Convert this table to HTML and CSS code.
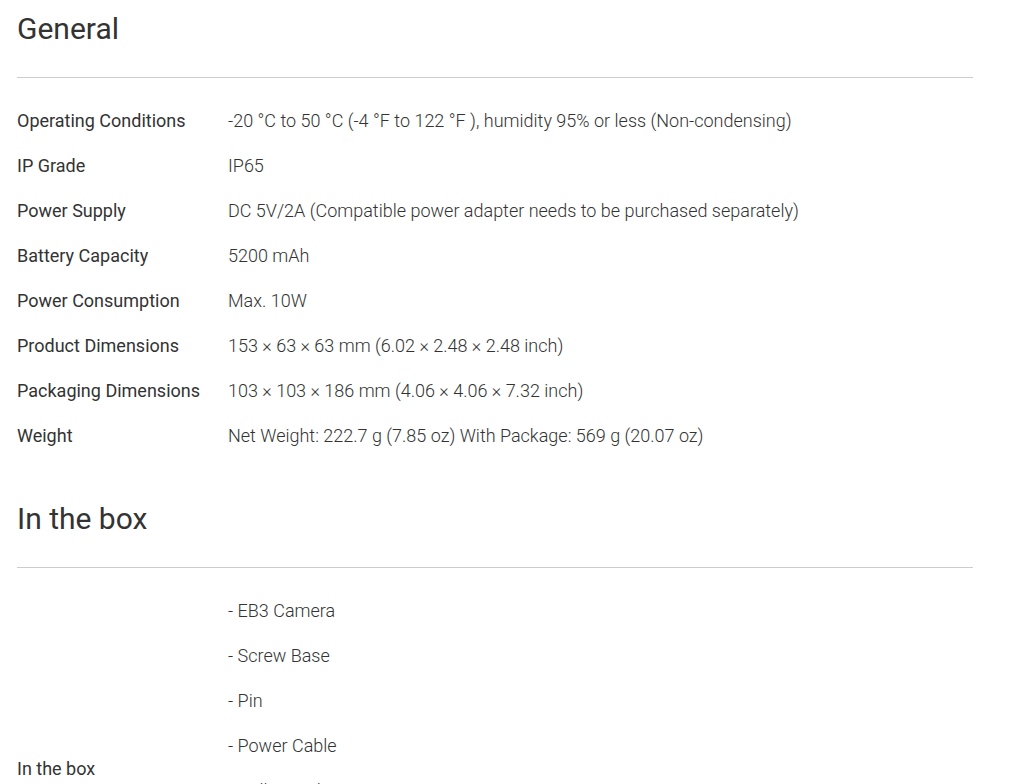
FILE: index.html
```html
<!DOCTYPE html>
<html lang="en">
<head>
<meta charset="utf-8">
<title>Specs</title>
<link rel="stylesheet" href="styles.css">
</head>
<body>
<div class="page">
  <section class="section">
    <h2 class="section-title">General</h2>
    <div class="specs">
      <div class="spec-label">Operating Conditions</div>
      <div class="spec-value">-20 °C to 50 °C (-4 °F to 122 °F ), humidity 95% or less (Non-condensing)</div>
      <div class="spec-label">IP Grade</div>
      <div class="spec-value">IP65</div>
      <div class="spec-label">Power Supply</div>
      <div class="spec-value">DC 5V/2A (Compatible power adapter needs to be purchased separately)</div>
      <div class="spec-label">Battery Capacity</div>
      <div class="spec-value">5200 mAh</div>
      <div class="spec-label">Power Consumption</div>
      <div class="spec-value">Max. 10W</div>
      <div class="spec-label">Product Dimensions</div>
      <div class="spec-value">153 × 63 × 63 mm (6.02 × 2.48 × 2.48 inch)</div>
      <div class="spec-label">Packaging Dimensions</div>
      <div class="spec-value">103 × 103 × 186 mm (4.06 × 4.06 × 7.32 inch)</div>
      <div class="spec-label">Weight</div>
      <div class="spec-value">Net Weight: 222.7 g (7.85 oz) With Package: 569 g (20.07 oz)</div>
    </div>
  </section>
  <section class="section">
    <h2 class="section-title">In the box</h2>
    <div class="specs">
      <div class="spec-label spec-label-mid">In the box</div>
      <div class="spec-list">
        <div class="spec-value">- EB3 Camera</div>
        <div class="spec-value">- Screw Base</div>
        <div class="spec-value">- Pin</div>
        <div class="spec-value">- Power Cable</div>
        <div class="spec-value">- Drill Template</div>
        <div class="spec-value">- Screw Kit</div>
        <div class="spec-value">- Quick Start Guide</div>
        <div class="spec-value">- Regulatory Information</div>
      </div>
    </div>
  </section>
</div>
</body>
</html>
```

FILE: styles.css
```css
html, body {
  margin: 0;
  padding: 0;
  background: #ffffff;
}
body {
  font-family: Roboto, "Liberation Sans", sans-serif;
  color: #333333;
}
.page {
  width: 956px;
  margin-left: 17px;
  padding-top: 10px;
}
.section + .section {
  margin-top: 42px;
}
.section-title {
  margin: 0;
  font-size: 30px;
  line-height: 38px;
  font-weight: 400;
  color: #333333;
  padding-bottom: 29px;
  border-bottom: 1px solid #cccccc;
}
.specs {
  display: grid;
  grid-template-columns: 211px 1fr;
  padding-top: 20px;
}
.spec-label {
  font-size: 18px;
  line-height: 45px;
  font-weight: 400;
  color: #333333;
}
.spec-label-mid {
  align-self: center;
}
.spec-value {
  font-size: 18px;
  line-height: 45px;
  font-weight: 300;
  color: #333333;
}
```
